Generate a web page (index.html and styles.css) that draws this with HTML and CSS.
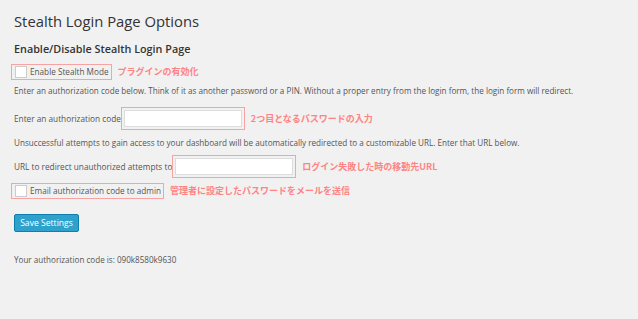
FILE: index.html
```html
<!DOCTYPE html>
<html>
<head><title>Stealth Login Page Options</title>
<meta charset="utf-8"/>
<link rel="stylesheet" href="styles.css">
</head>
<body>
<div class="wrap">
    <div class="title">Stealth Login Page Options</div>
    <div class="sub-title">Enable/Disable Stealth Login Page</div>

    <div class="row row-check first">
        <span class="mark">
            <span class="checkbox"></span>
            <span class="check-label">Enable Stealth Mode</span>
        </span>
        <span class="note">プラグインの有効化</span>
    </div>

    <div class="desc">Enter an authorization code below. Think of it as another password or a PIN. Without a proper entry from the login form, the login form will redirect.</div>

    <div class="row row-input first-input">
        <span class="field-label">Enter an authorization code</span>
        <span class="mark mark-input"><input type="text" class="text-input"></span>
        <span class="note">2つ目となるパスワードの入力</span>
    </div>

    <div class="desc desc-2">Unsuccessful attempts to gain access to your dashboard will be automatically redirected to a customizable URL. Enter that URL below.</div>

    <div class="row row-input">
        <span class="field-label">URL to redirect unauthorized attempts to</span>
        <span class="mark mark-input"><input type="text" class="text-input"></span>
        <span class="note">ログイン失敗した時の移動先URL</span>
    </div>

    <div class="row row-check">
        <span class="mark">
            <span class="checkbox"></span>
            <span class="check-label">Email authorization code to admin</span>
        </span>
        <span class="note">管理者に設定したパスワードをメールを送信</span>
    </div>

    <div class="btn-row"><button class="btn">Save Settings</button></div>

    <div class="code">Your authorization code is: 090k8580k9630</div>
</div>
</body>
</html>
```

FILE: styles.css
```css
body {
    margin: 0;
    background-color: #f1f1f1;
    font-family: "Open Sans", "Noto Sans CJK JP", sans-serif;
    color: #555;
}
.wrap {
    padding: 11px 14px;
}
.title {
    font-size: 14.8px;
    color: #333;
    line-height: 20px;
}
.sub-title {
    font-size: 10.8px;
    font-weight: 600;
    color: #333;
    margin-top: 11px;
    line-height: 14px;
}
.row {
    display: flex;
    align-items: center;
}
.row-check {
    margin-top: 5px;
    margin-left: -3px;
}
.row-check.first {
    margin-top: 8px;
}
.mark {
    display: flex;
    align-items: center;
    border: 1px solid #f7a3a3;
    height: 14px;
    padding: 0 2px 0 3px;
}
.checkbox {
    width: 10px;
    height: 10px;
    border: 1px solid #ccc;
    background-color: #fff;
    margin-right: 3px;
}
.check-label {
    font-size: 8.2px;
    line-height: 12px;
    color: #555;
}
.note {
    font-family: "Noto Sans CJK JP", sans-serif;
    font-weight: bold;
    font-size: 9px;
    line-height: 12px;
    color: #ff8383;
    margin-left: 6px;
}
.desc {
    font-size: 8.15px;
    margin-top: 5px;
    line-height: 12px;
}
.desc-2 {
    margin-top: 7px;
}
.row-input {
    margin-top: 6px;
}
.row-input.first-input {
    margin-top: 10px;
}
.field-label {
    font-size: 8.25px;
    line-height: 12px;
}
.mark-input {
    height: 21px;
    padding: 0 2px;
}
.text-input {
    width: 116px;
    height: 15px;
    padding: 0;
    border: 1px solid #ddd;
    background-color: #fff;
    box-sizing: content-box;
}
.btn-row {
    margin-top: 15px;
    line-height: 0;
}
.btn {
    font-family: "Open Sans", sans-serif;
    font-size: 8.6px;
    color: #fff;
    background-color: #2ea2cc;
    border: 1px solid #0e80ab;
    border-radius: 2px;
    height: 18px;
    width: 65px;
    padding: 0;
}
.code {
    font-size: 8.1px;
    margin-top: 22px;
    line-height: 12px;
}
```
